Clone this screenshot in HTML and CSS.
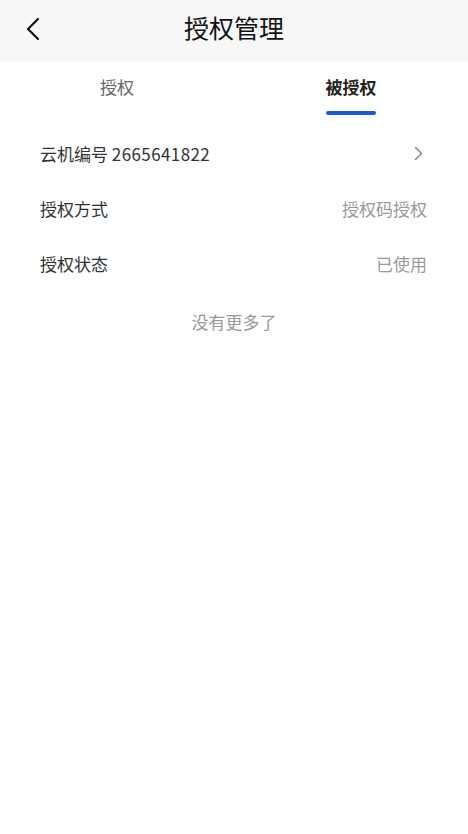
FILE: index.html
```html
<!DOCTYPE html>
<html lang="zh-CN">
<head>
<meta charset="utf-8">
<title>授权管理</title>
<link rel="stylesheet" href="styles.css">
</head>
<body>
<div class="page">
  <header class="nav">
    <span class="back">
      <svg width="14" height="24" viewBox="0 0 14 24"><path d="M12 2 L2 12 L12 22" fill="none" stroke="#111" stroke-width="2.2" stroke-linecap="round" stroke-linejoin="round"/></svg>
    </span>
    <h1 class="title">授权管理</h1>
  </header>
  <nav class="tabs">
    <div class="tab">
      <span class="tab-label">授权</span>
      <span class="tab-line"></span>
    </div>
    <div class="tab active">
      <span class="tab-label">被授权</span>
      <span class="tab-line"></span>
    </div>
  </nav>
  <section class="list">
    <div class="row">
      <span class="label">云机编号 <span class="num">2665641822</span></span>
      <svg class="arrow" width="9" height="15" viewBox="0 0 9 15"><path d="M1.5 1.5 L7.5 7.5 L1.5 13.5" fill="none" stroke="#888" stroke-width="1.5" stroke-linecap="round" stroke-linejoin="round"/></svg>
    </div>
    <div class="row">
      <span class="label">授权方式</span>
      <span class="value">授权码授权</span>
    </div>
    <div class="row">
      <span class="label">授权状态</span>
      <span class="value">已使用</span>
    </div>
  </section>
  <p class="end">没有更多了</p>
</div>
</body>
</html>
```
FILE: styles.css
```css
html, body {
  margin: 0;
  padding: 0;
  background: #ffffff;
}
body {
  font-family: "Noto Sans CJK SC", "Noto Sans", sans-serif;
  color: #333;
}
.page {
  width: 468px;
  min-height: 834px;
  background: #fff;
}
.nav {
  height: 62px;
  background: #f7f7f7;
  display: flex;
  align-items: center;
  justify-content: center;
  position: relative;
}
.back {
  position: absolute;
  left: 26px;
  top: 17px;
  width: 14px;
  height: 24px;
  display: flex;
}
.title {
  margin: 0;
  font-size: 25px;
  font-weight: 400;
  color: #111;
  line-height: 30px;
  margin-top: -9px;
}
.tabs {
  display: flex;
  height: 58px;
}
.tab {
  flex: 1;
  display: flex;
  flex-direction: column;
  align-items: center;
}
.tab-label {
  margin-top: 13px;
  font-size: 17px;
  line-height: 24px;
  color: #666;
}
.tab-line {
  margin-top: 12px;
  width: 50px;
  height: 4px;
  border-radius: 2px;
  background: transparent;
}
.tab.active .tab-label {
  font-weight: 700;
  color: #222;
}
.tab.active .tab-line {
  background: #1b5bd6;
}
.list {
  margin-top: 6px;
  padding: 0 41px 0 40px;
}
.row {
  height: 55px;
  display: flex;
  align-items: center;
  justify-content: space-between;
  font-size: 17px;
  line-height: 24px;
}
.label {
  color: #333;
}
.num {
  letter-spacing: 0.4px;
}
.value {
  color: #999;
}
.arrow {
  margin-right: 4px;
}
.end {
  margin: 19px 0 0;
  text-align: center;
  font-size: 17px;
  line-height: 24px;
  color: #999;
}
```
